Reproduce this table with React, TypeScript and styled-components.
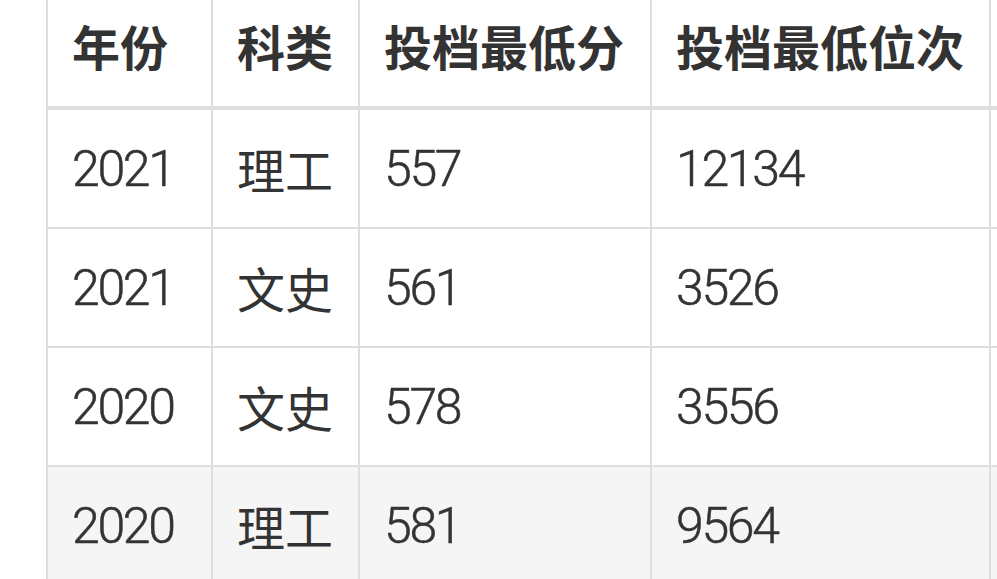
import React from "react";
import styled, { createGlobalStyle } from "styled-components";

const GlobalStyle = createGlobalStyle`
  html, body {
    margin: 0;
    padding: 0;
    background: #ffffff;
    overflow: hidden;
  }
  body {
    font-family: Roboto, "Noto Sans CJK SC", sans-serif;
    color: #333333;
  }
`;

const LINE = "#dedede";
const COLUMNS = "165px 147px 292px 339px 200px";

const Page = styled.div`
  width: 997px;
  height: 579px;
  overflow: hidden;
`;

const Grid = styled.div`
  margin-left: 46px;
  border-left: 2px solid ${LINE};
  width: 1200px;
`;

const HeaderRow = styled.div`
  display: grid;
  grid-template-columns: ${COLUMNS};
  height: 110px;
  box-sizing: border-box;
  border-bottom: 4px solid ${LINE};
`;

const Row = styled.div<{ $shaded?: boolean }>`
  display: grid;
  grid-template-columns: ${COLUMNS};
  height: 119px;
  box-sizing: border-box;
  border-bottom: 2px solid ${LINE};
  background: ${(p) => (p.$shaded ? "#f5f5f5" : "#ffffff")};
`;

const HeadCell = styled.div`
  display: flex;
  align-items: center;
  box-sizing: border-box;
  padding: 0 0 14px 24px;
  border-right: 2px solid ${LINE};
  font-family: "Noto Sans CJK SC", sans-serif;
  font-weight: 700;
  font-size: 48px;
  line-height: 1.2;
  color: #333333;
  white-space: nowrap;
`;

const Cell = styled.div<{ $numeric?: boolean }>`
  display: flex;
  align-items: center;
  box-sizing: border-box;
  padding: 0 0 0 24px;
  border-right: 2px solid ${LINE};
  font-family: ${(p) =>
    p.$numeric ? 'Roboto, "Noto Sans CJK SC", sans-serif' : '"Noto Sans CJK SC", sans-serif'};
  font-weight: ${(p) => (p.$numeric ? 300 : 400)};
  font-size: ${(p) => (p.$numeric ? "50px" : "48px")};
  letter-spacing: ${(p) => (p.$numeric ? "-2.3px" : "0")};
  -webkit-text-stroke: ${(p) => (p.$numeric ? "0.5px #333333" : "0")};
  line-height: 1.2;
  color: #333333;
  white-space: nowrap;
`;

const headers = ["年份", "科类", "投档最低分", "投档最低位次", ""];

const rows = [
  ["2021", "理工", "557", "12134"],
  ["2021", "文史", "561", "3526"],
  ["2020", "文史", "578", "3556"],
  ["2020", "理工", "581", "9564"],
];

const isNumeric = (s: string) => /^\d+$/.test(s);

export default function App() {
  return (
    <Page>
      <GlobalStyle />
      <Grid>
        <HeaderRow>
          {headers.map((h, i) => (
            <HeadCell key={i}>{h}</HeadCell>
          ))}
        </HeaderRow>
        {rows.map((r, i) => (
          <Row key={i} $shaded={i === 3}>
            {r.map((c, j) => (
              <Cell key={j} $numeric={isNumeric(c)}>
                {c}
              </Cell>
            ))}
            <Cell />
          </Row>
        ))}
      </Grid>
    </Page>
  );
}
